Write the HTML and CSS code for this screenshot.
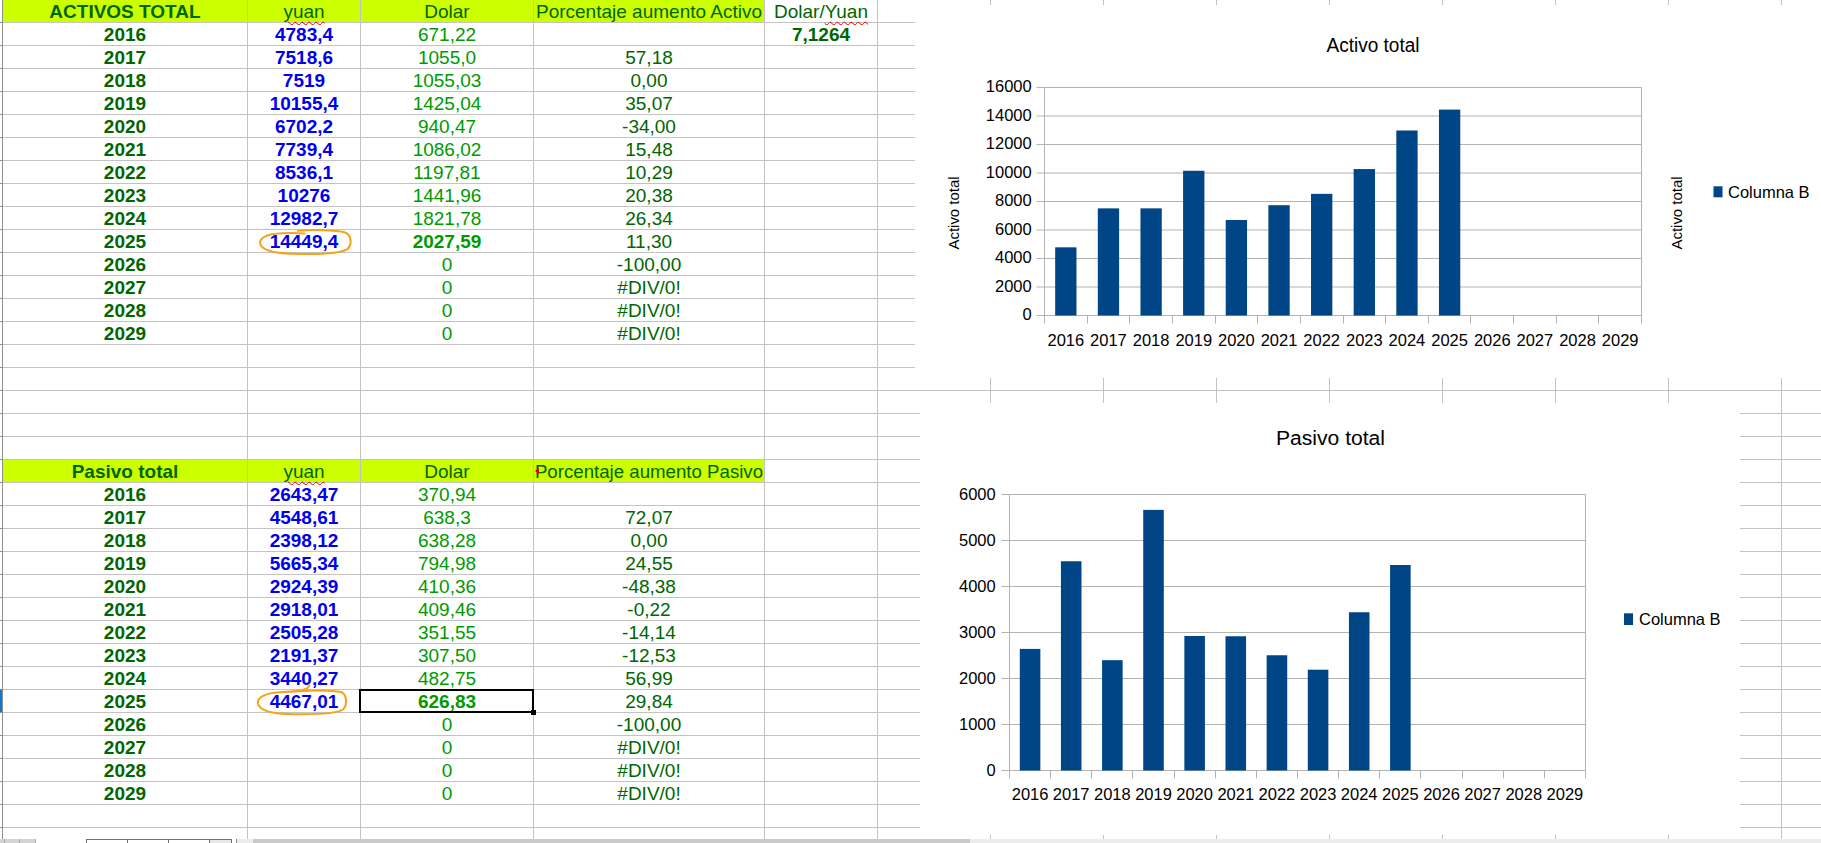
FILE: index.html
```html
<!DOCTYPE html>
<html lang="es">
<head>
<meta charset="utf-8">
<title>Activos y Pasivos</title>
<link rel="stylesheet" href="styles.css">
</head>
<body>
<div class="app">
  <div class="sheet">
    <div class="grid">
      <!-- row 0 -->
      <div class="rh"></div><div class="hd bold">ACTIVOS TOTAL</div><div class="hd"><span class="sq">yuan</span></div><div class="hd">Dolar</div><div class="hd">Porcentaje aumento Activo</div><div class="pct">Dolar/<span class="sq">Yuan</span></div><div class="rest"></div>
      <!-- activos -->
      <div class="rh"></div><div class="yr">2016</div><div class="yu">4783,4</div><div class="usd">671,22</div><div class="pct"></div><div class="pct bold">7,1264</div><div class="rest"></div>
      <div class="rh"></div><div class="yr">2017</div><div class="yu">7518,6</div><div class="usd">1055,0</div><div class="pct">57,18</div><div></div><div class="rest"></div>
      <div class="rh"></div><div class="yr">2018</div><div class="yu">7519</div><div class="usd">1055,03</div><div class="pct">0,00</div><div></div><div class="rest"></div>
      <div class="rh"></div><div class="yr">2019</div><div class="yu">10155,4</div><div class="usd">1425,04</div><div class="pct">35,07</div><div></div><div class="rest"></div>
      <div class="rh"></div><div class="yr">2020</div><div class="yu">6702,2</div><div class="usd">940,47</div><div class="pct">-34,00</div><div></div><div class="rest"></div>
      <div class="rh"></div><div class="yr">2021</div><div class="yu">7739,4</div><div class="usd">1086,02</div><div class="pct">15,48</div><div></div><div class="rest"></div>
      <div class="rh"></div><div class="yr">2022</div><div class="yu">8536,1</div><div class="usd">1197,81</div><div class="pct">10,29</div><div></div><div class="rest"></div>
      <div class="rh"></div><div class="yr">2023</div><div class="yu">10276</div><div class="usd">1441,96</div><div class="pct">20,38</div><div></div><div class="rest"></div>
      <div class="rh"></div><div class="yr">2024</div><div class="yu">12982,7</div><div class="usd">1821,78</div><div class="pct">26,34</div><div></div><div class="rest"></div>
      <div class="rh"></div><div class="yr">2025</div><div class="yu">14449,4<svg class="ring ring-a" width="113" height="30" viewBox="0 -3 113 30"><path d="M50 0.8 C66 -0.6 87 0 96.5 2.2 C103.5 4.3 104.5 14.5 99.5 19.2 C91.5 24.2 68 24.6 43 23.8 C26 23.2 14.5 20.6 12.3 14.2 C10.6 7.8 19 3.8 34 3.2 C44 2.8 51 3 56.5 3.4"/></svg></div><div class="usd bold">2027,59</div><div class="pct">11,30</div><div></div><div class="rest"></div>
      <div class="rh"></div><div class="yr">2026</div><div></div><div class="usd">0</div><div class="pct">-100,00</div><div></div><div class="rest"></div>
      <div class="rh"></div><div class="yr">2027</div><div></div><div class="usd">0</div><div class="pct">#DIV/0!</div><div></div><div class="rest"></div>
      <div class="rh"></div><div class="yr">2028</div><div></div><div class="usd">0</div><div class="pct">#DIV/0!</div><div></div><div class="rest"></div>
      <div class="rh"></div><div class="yr">2029</div><div></div><div class="usd">0</div><div class="pct">#DIV/0!</div><div></div><div class="rest"></div>
      <!-- empty rows -->
      <div class="rh"></div><div></div><div></div><div></div><div></div><div></div><div class="rest"></div>
      <div class="rh"></div><div></div><div></div><div></div><div></div><div></div><div class="rest"></div>
      <div class="rh"></div><div></div><div></div><div></div><div></div><div></div><div class="rest"></div>
      <div class="rh"></div><div></div><div></div><div></div><div></div><div></div><div class="rest"></div>
      <div class="rh"></div><div></div><div></div><div></div><div></div><div></div><div class="rest"></div>
      <!-- pasivo header -->
      <div class="rh"></div><div class="hd bold">Pasivo total</div><div class="hd"><span class="sq">yuan</span></div><div class="hd">Dolar</div><div class="hd clip">Porcentaje aumento Pasivo</div><div></div><div class="rest"></div>
      <!-- pasivos -->
      <div class="rh"></div><div class="yr">2016</div><div class="yu">2643,47</div><div class="usd">370,94</div><div class="pct"></div><div></div><div class="rest"></div>
      <div class="rh"></div><div class="yr">2017</div><div class="yu">4548,61</div><div class="usd">638,3</div><div class="pct">72,07</div><div></div><div class="rest"></div>
      <div class="rh"></div><div class="yr">2018</div><div class="yu">2398,12</div><div class="usd">638,28</div><div class="pct">0,00</div><div></div><div class="rest"></div>
      <div class="rh"></div><div class="yr">2019</div><div class="yu">5665,34</div><div class="usd">794,98</div><div class="pct">24,55</div><div></div><div class="rest"></div>
      <div class="rh"></div><div class="yr">2020</div><div class="yu">2924,39</div><div class="usd">410,36</div><div class="pct">-48,38</div><div></div><div class="rest"></div>
      <div class="rh"></div><div class="yr">2021</div><div class="yu">2918,01</div><div class="usd">409,46</div><div class="pct">-0,22</div><div></div><div class="rest"></div>
      <div class="rh"></div><div class="yr">2022</div><div class="yu">2505,28</div><div class="usd">351,55</div><div class="pct">-14,14</div><div></div><div class="rest"></div>
      <div class="rh"></div><div class="yr">2023</div><div class="yu">2191,37</div><div class="usd">307,50</div><div class="pct">-12,53</div><div></div><div class="rest"></div>
      <div class="rh"></div><div class="yr">2024</div><div class="yu">3440,27</div><div class="usd">482,75</div><div class="pct">56,99</div><div></div><div class="rest"></div>
      <div class="rh rh-sel"></div><div class="yr">2025</div><div class="yu">4467,01<svg class="ring ring-p" width="113" height="34" viewBox="0 -7 113 34"><path d="M47 1.6 C63 0 84 0 93 2 C99 4 99.6 15 95 19.5 C87 24.5 64 24.6 40 24 C23 23.5 11.5 20.5 10 13.5 C9 7 18 2.6 35 2 C46 1.7 54 1.2 59 -1.5 C60 -2.6 61 -3.8 61.5 -4.8"/></svg></div><div class="usd bold sel">626,83</div><div class="pct">29,84</div><div></div><div class="rest"></div>
      <div class="rh"></div><div class="yr">2026</div><div></div><div class="usd">0</div><div class="pct">-100,00</div><div></div><div class="rest"></div>
      <div class="rh"></div><div class="yr">2027</div><div></div><div class="usd">0</div><div class="pct">#DIV/0!</div><div></div><div class="rest"></div>
      <div class="rh"></div><div class="yr">2028</div><div></div><div class="usd">0</div><div class="pct">#DIV/0!</div><div></div><div class="rest"></div>
      <div class="rh"></div><div class="yr">2029</div><div></div><div class="usd">0</div><div class="pct">#DIV/0!</div><div></div><div class="rest"></div>
      <!-- trailing rows -->
      <div class="rh"></div><div></div><div></div><div></div><div></div><div></div><div class="rest"></div>
      <div class="rh"></div><div></div><div></div><div></div><div></div><div></div><div class="rest"></div>
    </div>

    <!-- Chart: Activo total -->
    <div class="chart chart-activo">
      <svg width="906" height="373" viewBox="0 0 906 373">
        <text class="ttl" x="458" y="46.7" text-anchor="middle" textLength="93" lengthAdjust="spacingAndGlyphs">Activo total</text>
        <g class="gl">
          <line x1="129.5" x2="726.5" y1="82.5" y2="82.5"/>
          <line x1="129.5" x2="726.5" y1="111" y2="111"/>
          <line x1="129.5" x2="726.5" y1="139.5" y2="139.5"/>
          <line x1="129.5" x2="726.5" y1="168" y2="168"/>
          <line x1="129.5" x2="726.5" y1="196.5" y2="196.5"/>
          <line x1="129.5" x2="726.5" y1="225" y2="225"/>
          <line x1="129.5" x2="726.5" y1="253.5" y2="253.5"/>
          <line x1="129.5" x2="726.5" y1="282" y2="282"/>
          <line x1="129.5" x2="726.5" y1="310.5" y2="310.5"/>
          <line x1="726.5" x2="726.5" y1="82.5" y2="310.5"/>
          <line x1="129.5" x2="129.5" y1="82.5" y2="318.5"/>
          <line x1="121.5" x2="129.5" y1="82.5" y2="82.5"/>
          <line x1="121.5" x2="129.5" y1="111" y2="111"/>
          <line x1="121.5" x2="129.5" y1="139.5" y2="139.5"/>
          <line x1="121.5" x2="129.5" y1="168" y2="168"/>
          <line x1="121.5" x2="129.5" y1="196.5" y2="196.5"/>
          <line x1="121.5" x2="129.5" y1="225" y2="225"/>
          <line x1="121.5" x2="129.5" y1="253.5" y2="253.5"/>
          <line x1="121.5" x2="129.5" y1="282" y2="282"/>
          <line x1="121.5" x2="129.5" y1="310.5" y2="310.5"/>
          <line x1="172.5" x2="172.5" y1="310.5" y2="318.5"/>
          <line x1="214.5" x2="214.5" y1="310.5" y2="318.5"/>
          <line x1="257.5" x2="257.5" y1="310.5" y2="318.5"/>
          <line x1="300.5" x2="300.5" y1="310.5" y2="318.5"/>
          <line x1="342.5" x2="342.5" y1="310.5" y2="318.5"/>
          <line x1="385.5" x2="385.5" y1="310.5" y2="318.5"/>
          <line x1="428.5" x2="428.5" y1="310.5" y2="318.5"/>
          <line x1="470.5" x2="470.5" y1="310.5" y2="318.5"/>
          <line x1="513.5" x2="513.5" y1="310.5" y2="318.5"/>
          <line x1="555.5" x2="555.5" y1="310.5" y2="318.5"/>
          <line x1="598.5" x2="598.5" y1="310.5" y2="318.5"/>
          <line x1="641.5" x2="641.5" y1="310.5" y2="318.5"/>
          <line x1="683.5" x2="683.5" y1="310.5" y2="318.5"/>
          <line x1="726.5" x2="726.5" y1="310.5" y2="318.5"/>
        </g>
        <g class="bars">
          <rect x="140.16" y="242.34" width="21.32" height="68.16"/>
          <rect x="182.80" y="203.36" width="21.32" height="107.14"/>
          <rect x="225.45" y="203.35" width="21.32" height="107.15"/>
          <rect x="268.09" y="165.79" width="21.32" height="144.71"/>
          <rect x="310.73" y="214.99" width="21.32" height="95.51"/>
          <rect x="353.38" y="200.21" width="21.32" height="110.29"/>
          <rect x="396.02" y="188.86" width="21.32" height="121.64"/>
          <rect x="438.66" y="164.07" width="21.32" height="146.43"/>
          <rect x="481.30" y="125.50" width="21.32" height="185.00"/>
          <rect x="523.95" y="104.60" width="21.32" height="205.90"/>
        </g>
        <g class="lbl" text-anchor="end">
          <text x="116.7" y="87.3">16000</text>
          <text x="116.7" y="115.8">14000</text>
          <text x="116.7" y="144.3">12000</text>
          <text x="116.7" y="172.8">10000</text>
          <text x="116.7" y="201.3">8000</text>
          <text x="116.7" y="229.8">6000</text>
          <text x="116.7" y="258.3">4000</text>
          <text x="116.7" y="286.8">2000</text>
          <text x="116.7" y="315.3">0</text>
        </g>
        <g class="lbl" text-anchor="middle">
          <text x="150.82" y="341">2016</text>
          <text x="193.46" y="341">2017</text>
          <text x="236.11" y="341">2018</text>
          <text x="278.75" y="341">2019</text>
          <text x="321.39" y="341">2020</text>
          <text x="364.04" y="341">2021</text>
          <text x="406.68" y="341">2022</text>
          <text x="449.32" y="341">2023</text>
          <text x="491.96" y="341">2024</text>
          <text x="534.61" y="341">2025</text>
          <text x="577.25" y="341">2026</text>
          <text x="619.89" y="341">2027</text>
          <text x="662.54" y="341">2028</text>
          <text x="705.18" y="341">2029</text>
        </g>
        <text class="axt" transform="translate(43.7 208) rotate(-90)" text-anchor="middle" textLength="73" lengthAdjust="spacingAndGlyphs">Activo total</text>
        <text class="axt" transform="translate(767.4 208) rotate(-90)" text-anchor="middle" textLength="73" lengthAdjust="spacingAndGlyphs">Activo total</text>
        <rect class="key" x="798.5" y="181.3" width="9" height="11"/>
        <text class="leg" x="813" y="193.3">Columna B</text>
      </svg>
    </div>

    <!-- Chart: Pasivo total -->
    <div class="chart chart-pasivo">
      <svg width="820" height="432" viewBox="0 0 820 432">
        <text class="ttl" x="410.5" y="42" text-anchor="middle" textLength="109" lengthAdjust="spacingAndGlyphs" font-size="22">Pasivo total</text>
        <g class="gl">
          <line x1="89.5" x2="665.5" y1="91.5" y2="91.5"/>
          <line x1="89.5" x2="665.5" y1="137.5" y2="137.5"/>
          <line x1="89.5" x2="665.5" y1="183.5" y2="183.5"/>
          <line x1="89.5" x2="665.5" y1="229.5" y2="229.5"/>
          <line x1="89.5" x2="665.5" y1="275.5" y2="275.5"/>
          <line x1="89.5" x2="665.5" y1="321.5" y2="321.5"/>
          <line x1="89.5" x2="665.5" y1="367.5" y2="367.5"/>
          <line x1="665.5" x2="665.5" y1="91.5" y2="367.5"/>
          <line x1="89.5" x2="89.5" y1="91.5" y2="375.5"/>
          <line x1="81.5" x2="89.5" y1="91.5" y2="91.5"/>
          <line x1="81.5" x2="89.5" y1="137.5" y2="137.5"/>
          <line x1="81.5" x2="89.5" y1="183.5" y2="183.5"/>
          <line x1="81.5" x2="89.5" y1="229.5" y2="229.5"/>
          <line x1="81.5" x2="89.5" y1="275.5" y2="275.5"/>
          <line x1="81.5" x2="89.5" y1="321.5" y2="321.5"/>
          <line x1="81.5" x2="89.5" y1="367.5" y2="367.5"/>
          <line x1="130.5" x2="130.5" y1="367.5" y2="375.5"/>
          <line x1="171.5" x2="171.5" y1="367.5" y2="375.5"/>
          <line x1="212.5" x2="212.5" y1="367.5" y2="375.5"/>
          <line x1="254.5" x2="254.5" y1="367.5" y2="375.5"/>
          <line x1="295.5" x2="295.5" y1="367.5" y2="375.5"/>
          <line x1="336.5" x2="336.5" y1="367.5" y2="375.5"/>
          <line x1="377.5" x2="377.5" y1="367.5" y2="375.5"/>
          <line x1="418.5" x2="418.5" y1="367.5" y2="375.5"/>
          <line x1="459.5" x2="459.5" y1="367.5" y2="375.5"/>
          <line x1="500.5" x2="500.5" y1="367.5" y2="375.5"/>
          <line x1="542.5" x2="542.5" y1="367.5" y2="375.5"/>
          <line x1="583.5" x2="583.5" y1="367.5" y2="375.5"/>
          <line x1="624.5" x2="624.5" y1="367.5" y2="375.5"/>
          <line x1="665.5" x2="665.5" y1="367.5" y2="375.5"/>
        </g>
        <g class="bars">
          <rect x="99.79" y="245.90" width="20.57" height="121.60"/>
          <rect x="140.93" y="158.26" width="20.57" height="209.24"/>
          <rect x="182.07" y="257.19" width="20.57" height="110.31"/>
          <rect x="223.22" y="106.89" width="20.57" height="260.61"/>
          <rect x="264.36" y="232.98" width="20.57" height="134.52"/>
          <rect x="305.50" y="233.27" width="20.57" height="134.23"/>
          <rect x="346.65" y="252.26" width="20.57" height="115.24"/>
          <rect x="387.79" y="266.70" width="20.57" height="100.80"/>
          <rect x="428.93" y="209.25" width="20.57" height="158.25"/>
          <rect x="470.08" y="162.02" width="20.57" height="205.48"/>
        </g>
        <g class="lbl" text-anchor="end">
          <text x="75.7" y="97">6000</text>
          <text x="75.7" y="143">5000</text>
          <text x="75.7" y="189">4000</text>
          <text x="75.7" y="235">3000</text>
          <text x="75.7" y="281">2000</text>
          <text x="75.7" y="327">1000</text>
          <text x="75.7" y="373">0</text>
        </g>
        <g class="lbl" text-anchor="middle">
          <text x="110.07" y="397">2016</text>
          <text x="151.21" y="397">2017</text>
          <text x="192.36" y="397">2018</text>
          <text x="233.50" y="397">2019</text>
          <text x="274.64" y="397">2020</text>
          <text x="315.79" y="397">2021</text>
          <text x="356.93" y="397">2022</text>
          <text x="398.07" y="397">2023</text>
          <text x="439.21" y="397">2024</text>
          <text x="480.36" y="397">2025</text>
          <text x="521.50" y="397">2026</text>
          <text x="562.64" y="397">2027</text>
          <text x="603.79" y="397">2028</text>
          <text x="644.93" y="397">2029</text>
        </g>
        <rect class="key" x="704" y="210.3" width="9" height="11.7"/>
        <text class="leg" x="719" y="222">Columna B</text>
      </svg>
    </div>
  </div>

  <div class="tabbar">
    <div class="navbtns"><span></span><span></span><span></span></div>
    <div class="tabs"><span class="tab"></span><span class="tab"></span><span class="tab"></span><span class="tab tab-cur"></span></div>
    <div class="hscroll"><div class="thumb"></div></div>
  </div>
</div>
</body>
</html>
```

FILE: styles.css
```css
* { box-sizing: border-box; }

html, body {
  margin: 0;
  padding: 0;
  background: #ffffff;
  overflow: hidden;
}

body {
  width: 1821px;
  height: 843px;
  font-family: "Liberation Sans", Arial, sans-serif;
}

.app {
  display: flex;
  flex-direction: column;
  height: 843px;
}

.sheet {
  position: relative;
  height: 839px;
  flex: none;
  overflow: hidden;
}

.grid {
  display: grid;
  grid-template-columns: 3px 245px 113px 173px 231px 113px 1fr;
  grid-auto-rows: 23px;
  width: 1821px;
}

.grid > div {
  position: relative;
  display: flex;
  align-items: center;
  justify-content: center;
  padding-top: 1px;
  border-right: 1px solid #c3c3c3;
  border-bottom: 1px solid #c3c3c3;
  font-size: 19px;
  white-space: nowrap;
  color: #006600;
}

.grid > .rh {
  border-right-color: #8e8e8e;
  border-bottom-color: #8e8e8e;
  background: #ffffff;
}

.grid > .rh-sel {
  background: #1377d3;
}

.grid > .rest {
  border-right: 0;
  background: repeating-linear-gradient(to right, transparent 0 112px, #c3c3c3 112px 113px);
}

.grid > .hd {
  background: #ccff00;
  color: #006600;
}

.grid > .clip {
  font-size: 18.67px;
}

.bold { font-weight: bold; }

.yr {
  font-weight: bold;
  color: #006600;
}

.grid > .yu {
  font-weight: bold;
  color: #0000f0;
}

.grid > .usd {
  color: #009a00;
}

.grid > .pct {
  color: #006600;
}

.sq {
  text-decoration: underline wavy #e00000;
  text-decoration-thickness: 1px;
  text-underline-offset: 3px;
}

.clip::before {
  content: "";
  position: absolute;
  left: 1px;
  top: 8px;
  width: 0;
  height: 0;
  border-top: 3px solid transparent;
  border-bottom: 3px solid transparent;
  border-right: 4px solid #e00000;
}

.ring {
  position: absolute;
  left: 0;
  overflow: visible;
  fill: none;
  stroke: #f5a21c;
  stroke-width: 2;
  stroke-linecap: round;
  stroke-linejoin: round;
}

.ring-a { top: -3px; }
.ring-p { top: -7px; }

.sel::after {
  content: "";
  position: absolute;
  left: -2px;
  top: -1px;
  right: -1px;
  bottom: -1px;
  border: 2px solid #000000;
}

.sel::before {
  content: "";
  position: absolute;
  right: -3px;
  bottom: -3px;
  width: 5px;
  height: 5px;
  background: #000000;
  z-index: 1;
}

/* charts */
.chart {
  position: absolute;
  background: #ffffff;
}

.chart svg { display: block; }

.chart-activo {
  left: 915px;
  top: 5px;
  width: 906px;
  height: 373px;
}

.chart-pasivo {
  left: 920px;
  top: 403px;
  width: 820px;
  height: 432px;
}

.chart text {
  font-family: "Liberation Sans", Arial, sans-serif;
  fill: #000000;
}

.chart .ttl { font-size: 20px; }
.chart .lbl { font-size: 16.5px; }
.chart .axt { font-size: 15.5px; }
.chart .leg { font-size: 16.5px; }

.gl line {
  stroke: #b3b3b3;
  stroke-width: 1;
}

.bars rect,
.key {
  fill: #004586;
}

/* sheet tab bar */
.tabbar {
  display: flex;
  height: 24px;
  flex: none;
  background: #ffffff;
}

.navbtns {
  display: flex;
  width: 37px;
  height: 100%;
}

.navbtns span {
  width: 16px;
  height: 100%;
  background: #d4d4d4;
  border-right: 1px solid #a9a9a9;
}

.navbtns span:first-child { width: 5px; }
.navbtns span:nth-child(2) { width: 15px; }

.tabs {
  display: flex;
  margin-left: 49px;
  height: 100%;
}

.tab {
  width: 41px;
  height: 100%;
  border-top: 1px solid #6f6f6f;
  border-left: 1px solid #6f6f6f;
  background: #ffffff;
}

.tab-cur {
  width: 23px;
  background: #e8e8e8;
  border-right: 1px solid #6f6f6f;
}

.hscroll {
  flex: 1;
  display: flex;
  margin-left: 4px;
  padding-left: 16px;
  background: #ececec;
  border-left: 1px solid #8a8a8a;
}

.thumb {
  width: 717px;
  height: 100%;
  background: #c9c9c9;
}
```
